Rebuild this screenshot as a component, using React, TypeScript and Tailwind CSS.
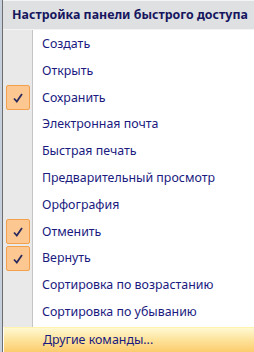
import React from 'react';

interface Item {
  label: string;
  checked?: boolean;
}

const ITEMS: Item[] = [
  { label: 'Создать' },
  { label: 'Открыть' },
  { label: 'Сохранить', checked: true },
  { label: 'Электронная почта' },
  { label: 'Быстрая печать' },
  { label: 'Предварительный просмотр' },
  { label: 'Орфография' },
  { label: 'Отменить', checked: true },
  { label: 'Вернуть', checked: true },
  { label: 'Сортировка по возрастанию' },
  { label: 'Сортировка по убыванию' },
];

const Check = () => (
  <div className="w-[24px] h-[25px] rounded-[2px] border border-[#f2a04c] bg-[#fdc792] flex items-center justify-center">
    <svg width="12" height="12" viewBox="0 0 12 12">
      <path d="M2 6.5 L4.8 9.5 L10 2" fill="none" stroke="#2a2a5e" strokeWidth="1.8" />
    </svg>
  </div>
);

const App: React.FC = () => {
  return (
    <div
      className="w-[254px] h-[352px] flex bg-white overflow-hidden"
      style={{ fontFamily: '"Noto Sans", "Open Sans", sans-serif' }}
    >
      <div className="w-[2px] bg-[#c6d0dc]" />
      <div className="flex-1 flex flex-col border-l border-[#6e6e6e]">
        <div className="h-[30px] shrink-0 flex items-center pl-[9px] bg-[#dfe0e2] border-t border-[#f4f4f4] border-b border-[#c6c6c6] text-[12.4px] font-bold text-[#16165e] whitespace-nowrap">
          Настройка панели быстрого доступа
        </div>
        <div className="flex-1 flex flex-col">
          <div className="flex-1 flex flex-col">
            <div className="h-px flex">
              <div className="w-[30px] bg-[#e9e9ea] border-r border-[#c5c5c5]" />
            </div>
            {ITEMS.map((item) => (
              <div key={item.label} className="h-[26.8px] flex">
                <div className="w-[30px] bg-[#e9e9ea] border-r border-[#c5c5c5] flex items-center pl-[3px]">
                  {item.checked && <Check />}
                </div>
                <div className="flex-1 flex items-center pl-[9px] text-[12.4px] text-[#1a1a80] whitespace-nowrap">
                  {item.label}
                </div>
              </div>
            ))}
            <div className="flex-1 flex">
              <div className="w-[30px] bg-[#e9e9ea] border-r border-[#c5c5c5]" />
            </div>
          </div>
          <div className="h-[25px] shrink-0 ml-[1px] flex items-center pl-[39px] border-t border-[#fff3b0] bg-gradient-to-b from-[#fff8d2] via-[#fde39a] to-[#fccc6c] text-[12.4px] text-[#1a1a80]">
            Другие команды...
          </div>
        </div>
      </div>
    </div>
  );
};

export default App;
